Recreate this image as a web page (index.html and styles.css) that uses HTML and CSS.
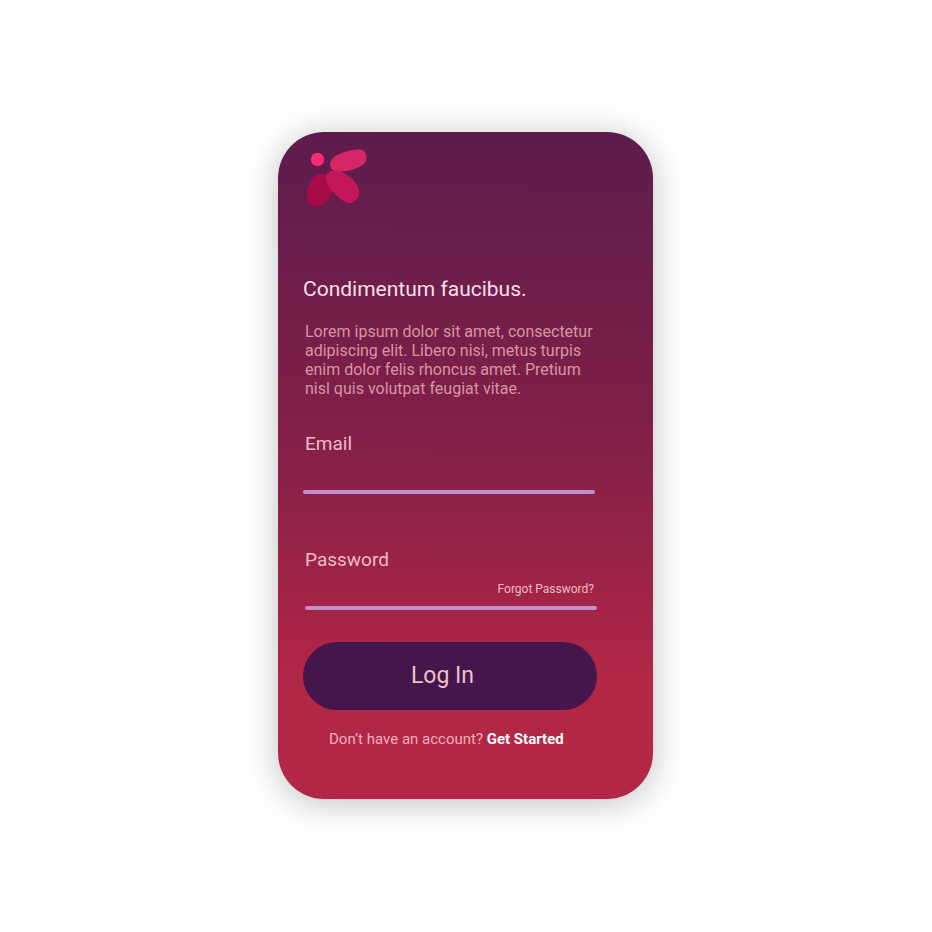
FILE: index.html
```
<!DOCTYPE html>
<html lang="en">
<head>
<meta charset="utf-8">
<meta name="viewport" content="width=device-width, initial-scale=1">
<title>Log In</title>
<link rel="stylesheet" href="styles.css">
</head>
<body>
<main class="card">
  <svg class="logo" viewBox="0 0 80 76" aria-hidden="true">
    <circle cx="21.5" cy="19.5" r="6.7" fill="#fb2a77"/>
    <path d="M25 34C17 34 11 45 11 56C10.500 63 15 66 21 66C31 66 37 54 37 47C37 38 33 34 25 34Z" fill="#a60b48"/>
    <path d="M34 24.500C34 15 52 9.500 64 9.500C68 9.500 70.500 13 70.500 18C70.500 26 56 31.500 43 31.500C38 31.500 34 29 34 24.500Z" fill="#d72668"/>
    <path d="M30 38C30 33 34 30.500 39 30.500C49 30.500 63.500 43 63.500 53C63.500 58 58 63 54 63C46 63 30 48 30 38Z" fill="#c4175b"/>
  </svg>
  <h1 class="title">Condimentum faucibus.</h1>
  <p class="intro">Lorem ipsum dolor sit amet, consectetur adipiscing elit. Libero nisi, metus turpis enim dolor felis rhoncus amet. Pretium nisl quis volutpat feugiat vitae.</p>
  <form class="form">
    <div class="field field-email">
      <label class="label" for="email">Email</label>
      <div class="entry">
        <input class="input" id="email" type="email">
      </div>
    </div>
    <div class="field field-password">
      <label class="label" for="password">Password</label>
      <div class="entry">
        <input class="input" id="password" type="password">
        <a class="forgot" href="#">Forgot Password?</a>
      </div>
    </div>
    <button class="submit" type="submit">Log In</button>
  </form>
  <p class="signup">Don’t have an account? <a class="signup-link" href="#">Get Started</a></p>
</main>
</body>
</html>
```
FILE: styles.css
```
* {
  box-sizing: border-box;
}

body {
  margin: 0;
  min-height: 100vh;
  padding: 0 1px 1px 0;
  display: flex;
  justify-content: center;
  align-items: center;
  background: #fff;
  font-family: Roboto, sans-serif;
}

.card {
  width: 100%;
  max-width: 375px;
  padding: 8px 56px 51px 25px;
  border-radius: 46px;
  background: linear-gradient(181deg, #5c1b4c 0%, #6e1e4a 22%, #7f1f48 42%, #8c2148 54%, #b22646 81%);
  box-shadow: 0 4px 34px rgba(0, 0, 0, 0.25);
}

.logo {
  display: block;
  width: 80px;
  height: 76px;
  margin-left: -7px;
}

.title {
  margin: 61px 0 0;
  font-size: 21px;
  line-height: 24px;
  font-weight: 400;
  color: #fbdfe6;
}

.intro {
  margin: 21px 0 0;
  padding-left: 2px;
  font-size: 16px;
  line-height: 19px;
  color: #da94a1;
}

.form {
  margin-top: 34px;
}

.field {
  display: flex;
  flex-direction: column;
}

.field-email {
  margin-right: 2px;
}

.field-password {
  margin: 54px 0 32px 2px;
}

.label {
  font-size: 19px;
  line-height: 24px;
  color: #f2bac5;
}

.field-email .label {
  padding-left: 2px;
}

.entry {
  display: flex;
  flex-wrap: wrap;
  align-items: center;
}

.entry::after {
  content: "";
  flex: 0 0 100%;
  height: 4px;
  border-radius: 2px;
  background: #c48fc7;
}

.input {
  flex: 1;
  min-width: 0;
  height: 34px;
  padding: 0 2px;
  border: 0;
  background: transparent;
  color: #fbdfe6;
  font: inherit;
  outline: none;
}

.forgot {
  margin-right: 3px;
  font-size: 12px;
  line-height: 14px;
  color: #f2bac5;
  text-decoration: none;
}

.submit {
  display: block;
  width: 100%;
  height: 68px;
  padding: 0 15px 0 0;
  border: 0;
  border-radius: 34px;
  background: #44164b;
  color: #f0c0c9;
  font-family: inherit;
  font-size: 23px;
  line-height: 28px;
}

.signup {
  margin: 20px 0 0;
  padding-left: 26px;
  font-size: 15px;
  line-height: 18px;
  white-space: nowrap;
  color: #f2b0bc;
}

.signup-link {
  color: #fff;
  font-weight: 700;
  text-decoration: none;
}
```
